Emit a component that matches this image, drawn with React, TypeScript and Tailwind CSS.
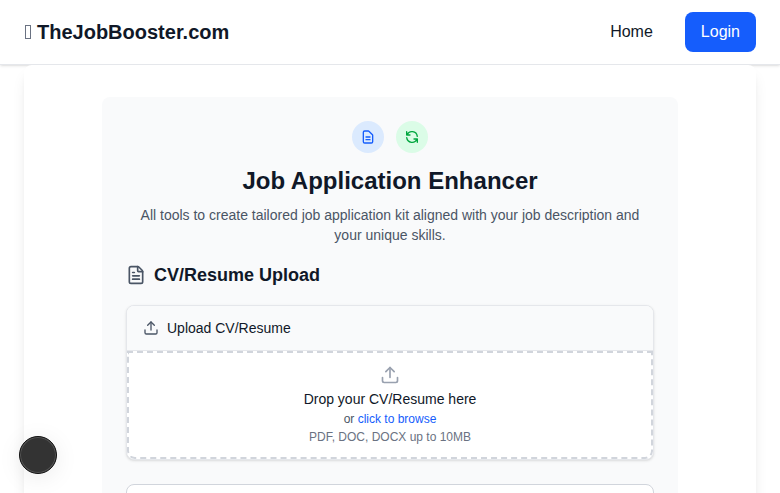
import React from "react";
import { FileText, Upload } from "lucide-react";

function DocumentIcon() {
  return (
    <svg className="size-4" viewBox="0 0 24 24" fill="none" stroke="currentColor" strokeWidth={2} strokeLinecap="round" strokeLinejoin="round">
      <path d="M9 12h6m-6 4h6m2 5H7a2 2 0 01-2-2V5a2 2 0 012-2h5.586a1 1 0 01.707.293l5.414 5.414a1 1 0 01.293.707V19a2 2 0 01-2 2z" />
    </svg>
  );
}

function RefreshIcon() {
  return (
    <svg className="size-4" viewBox="0 0 24 24" fill="none" stroke="currentColor" strokeWidth={2} strokeLinecap="round" strokeLinejoin="round">
      <path d="M4 4v5h.582m15.356 2A8.001 8.001 0 004.582 9m0 0H9m11 11v-5h-.581m0 0a8.003 8.003 0 01-15.357-2m15.357 2H15" />
    </svg>
  );
}

function Header() {
  return (
    <header className="flex h-[65px] shrink-0 items-center justify-between border-b border-gray-200 bg-white px-6 shadow-sm">
      <a className="flex items-center text-xl font-bold">
        <span className="mr-1.5 ml-px h-3.5 w-1.5 border border-gray-500" />
        TheJobBooster.com
      </a>
      <nav className="flex items-center gap-8">
        <a>Home</a>
        <button className="h-10 rounded-lg bg-[#155dfc] px-4 text-white">Login</button>
      </nav>
    </header>
  );
}

function UploadCard() {
  return (
    <div className="overflow-hidden rounded-lg border border-gray-200 bg-white shadow-sm">
      <div className="flex h-[45px] items-center gap-2 border-b border-gray-200 bg-gray-50 px-4 text-sm">
        <Upload className="size-4 text-gray-600" />
        <span>Upload CV/Resume</span>
      </div>
      <div className="flex h-[108px] flex-col items-center rounded-b-lg border-2 border-dashed border-gray-300 pt-3">
        <Upload className="size-5 text-gray-400" />
        <p className="mt-1 text-sm">Drop your CV/Resume here</p>
        <p className="mt-0.5 text-xs text-gray-600">
          or <span className="text-[#155dfc]">click to browse</span>
        </p>
        <p className="mt-0.5 text-xs text-gray-500">PDF, DOC, DOCX up to 10MB</p>
      </div>
    </div>
  );
}

export default function App() {
  return (
    <div className="flex h-screen flex-col overflow-hidden bg-white font-['Liberation_Sans',Arial,sans-serif] text-gray-900">
      <Header />
      <main className="relative mx-6 h-[800px] shrink-0 rounded-lg bg-white pt-8 shadow-lg">
        <section className="mx-auto h-[700px] w-[576px] rounded-lg bg-gray-50 p-6">
          <div className="mb-3 flex justify-center gap-3">
            <span className="flex size-8 items-center justify-center rounded-full bg-blue-100 text-[#155dfc]">
              <DocumentIcon />
            </span>
            <span className="flex size-8 items-center justify-center rounded-full bg-green-100 text-green-600">
              <RefreshIcon />
            </span>
          </div>
          <h1 className="mb-2 text-center text-2xl font-bold">Job Application Enhancer</h1>
          <p className="mb-4 text-center text-sm text-gray-600">
            All tools to create tailored job application kit aligned with your job description and your unique skills.
          </p>
          <h2 className="mb-4 flex items-center gap-2 text-lg font-bold">
            <FileText className="size-5 text-gray-600" />
            CV/Resume Upload
          </h2>
          <UploadCard />
          <div className="mt-6 h-32 rounded-lg border border-gray-300 bg-white" />
        </section>
      </main>
      <button
        aria-label="Settings"
        className="fixed bottom-[19px] left-[19px] size-[38px] rounded-full border border-[#111] bg-[#333] shadow-[inset_0_0_0_1px_#555,0_4px_24px_rgba(0,0,0,0.08)]"
      />
    </div>
  );
}
